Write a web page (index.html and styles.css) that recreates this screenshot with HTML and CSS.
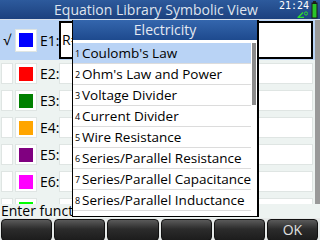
FILE: index.html
```html
<!DOCTYPE html>
<html lang="en">
<head>
	<meta charset="UTF-8">
	<title>Equation Library Symbolic View</title>
	<link rel="stylesheet" href="styles.css">
</head>
<body>
<div class="screen">

	<div class="titlebar">
		<div class="title">Equation Library Symbolic View</div>
		<div class="status">
			<div class="clock">
				<span class="time">21:24</span>
				<svg class="angle" width="11" height="7" viewBox="0 0 11 7">
					<path d="M1 6.5 L6 1.5 M0.5 6.5 H7" stroke="#2ee02e" stroke-width="1.3" fill="none"/>
					<circle cx="9" cy="2.5" r="1.6" stroke="#2ee02e" stroke-width="1" fill="none"/>
				</svg>
			</div>
			<svg class="battery" width="7" height="18" viewBox="0 0 7 18">
				<rect x="2" y="0" width="3" height="2" fill="#222"/>
				<rect x="0.5" y="1.5" width="6" height="16" fill="#1a1a1a"/>
				<rect x="1.5" y="3" width="4" height="13.5" fill="#29c429"/>
			</svg>
		</div>
	</div>

	<div class="main">
		<div class="rows">
			<div class="row sel">
				<div class="chk">&#8730;</div>
				<div class="swatch"><span class="sq" style="background:#0000ff"></span></div>
				<div class="lbl">E1:</div>
				<div class="field">R=</div>
			</div>
			<div class="row">
				<div class="chk"></div>
				<div class="swatch"><span class="sq" style="background:#ff0000"></span></div>
				<div class="lbl">E2:</div>
				<div class="field"></div>
			</div>
			<div class="row">
				<div class="chk"></div>
				<div class="swatch"><span class="sq" style="background:#008000"></span></div>
				<div class="lbl">E3:</div>
				<div class="field"></div>
			</div>
			<div class="row">
				<div class="chk"></div>
				<div class="swatch"><span class="sq" style="background:#ffa500"></span></div>
				<div class="lbl">E4:</div>
				<div class="field"></div>
			</div>
			<div class="row">
				<div class="chk"></div>
				<div class="swatch"><span class="sq" style="background:#800080"></span></div>
				<div class="lbl">E5:</div>
				<div class="field"></div>
			</div>
			<div class="row">
				<div class="chk"></div>
				<div class="swatch"><span class="sq" style="background:#ff00ff"></span></div>
				<div class="lbl">E6:</div>
				<div class="field"></div>
			</div>
			<div class="row">
				<div class="chk"></div>
				<div class="swatch"><span class="sq" style="background:#00ff00"></span></div>
				<div class="lbl">E7:</div>
				<div class="field"></div>
			</div>
		</div>
		<div class="vscroll"></div>
	</div>

	<div class="help">Enter function to solve</div>

	<div class="softkeys">
		<div class="key"></div>
		<div class="key"></div>
		<div class="key"></div>
		<div class="key"></div>
		<div class="key"></div>
		<div class="key">OK</div>
	</div>

	<!-- choose box -->
	<div class="popup">
		<div class="popup-head">Electricity</div>
		<div class="popup-body">
			<ul class="choices">
				<li class="cur"><span class="num">1</span>Coulomb's Law</li>
				<li><span class="num">2</span>Ohm's Law and Power</li>
				<li><span class="num">3</span>Voltage Divider</li>
				<li><span class="num">4</span>Current Divider</li>
				<li><span class="num">5</span>Wire Resistance</li>
				<li><span class="num">6</span>Series/Parallel Resistance</li>
				<li><span class="num">7</span>Series/Parallel Capacitance</li>
				<li><span class="num">8</span>Series/Parallel Inductance</li>
				<li><span class="num">9</span>Capacitive Energy</li>
			</ul>
			<div class="pscroll"></div>
		</div>
	</div>

</div>
</body>
</html>
```

FILE: styles.css
```css
* {
	margin: 0;
	padding: 0;
	box-sizing: border-box;
}
body {
	width: 320px;
	height: 240px;
	overflow: hidden;
	background: #edf3f1;
	font-family: "Open Sans", "DejaVu Sans", sans-serif;
	color: #000;
}
.screen {
	position: relative;
	width: 320px;
	height: 240px;
	display: flex;
	flex-direction: column;
}

/* title bar */
.titlebar {
	height: 20px;
	display: grid;
	background: linear-gradient(#2d5a9c, #1c417f);
	border-bottom: 1px solid #d6dfe9;
}
.title {
	grid-area: 1 / 1;
	text-align: center;
	padding-right: 8px;
	color: #dfe4ee;
	font-size: 14px;
	line-height: 19px;
}
.status {
	grid-area: 1 / 1;
	justify-self: end;
	display: flex;
	gap: 2px;
	padding: 1px 2px 0 0;
}
.clock {
	display: flex;
	flex-direction: column;
	align-items: flex-end;
}
.time {
	font-family: "DejaVu Sans Mono", monospace;
	font-size: 10px;
	line-height: 10px;
	color: #fff;
}
.angle {
	margin-right: 1px;
}

/* equation rows */
.main {
	flex: 1;
	display: flex;
	overflow: hidden;
}
.rows {
	flex: 1;
	overflow: hidden;
}
.row {
	height: 27px;
	display: flex;
	align-items: center;
	padding: 0 0 0 1px;
}
.row.sel {
	height: 40px;
	background: #b9d3f5;
}
.chk {
	width: 12px;
	height: 21px;
	margin-right: 2px;
	background: #fff;
	border: 1px solid #dfe5e3;
	font-size: 14px;
	line-height: 19px;
	text-align: center;
}
.sel .chk {
	background: none;
	border: none;
}
.swatch {
	width: 22px;
	height: 21px;
	background: #fff;
	border: 1px solid #dfe5e3;
	display: flex;
	align-items: center;
	justify-content: center;
}
.sel .swatch {
	height: 23px;
}
.sq {
	width: 14px;
	height: 14px;
}
.lbl {
	width: 22px;
	padding-left: 3px;
	font-size: 14px;
}
.field {
	flex: 1;
	height: 21px;
	margin-right: 2px;
	background: #fff;
	border: 1px solid #dfe5e3;
}
.sel .field {
	height: 38px;
	border: 2px solid #000;
	font-size: 14px;
	line-height: 34px;
	padding-left: 1px;
}
.vscroll {
	width: 5px;
	background: #999;
}

.help {
	height: 14px;
	font-size: 14px;
	line-height: 14px;
	padding-left: 1px;
	white-space: nowrap;
}

/* soft menu keys */
.softkeys {
	height: 22px;
	display: grid;
	grid-template-columns: repeat(6, 1fr);
	gap: 2px;
	padding: 1px 2px 0 1px;
	background: #e6e9e8;
}
.key {
	border: 1px solid #111;
	border-radius: 4px;
	background: linear-gradient(#5a5a5a, #2c2c2c 45%, #1c1c1c);
	color: #e0e0e0;
	font-size: 14px;
	line-height: 20px;
	text-align: center;
}

/* choose box */
.popup {
	position: absolute;
	left: 72px;
	top: 20px;
	width: 187px;
	height: 197px;
	display: flex;
	flex-direction: column;
	background: #fff;
	border-left: 1px solid #000;
	border-right: 2px solid #000;
	border-bottom: 1px solid #000;
	overflow: hidden;
}
.popup-head {
	height: 20px;
	background: linear-gradient(#3466ad, #1e4a8e);
	color: #e6eaf2;
	text-align: center;
	font-size: 14px;
	line-height: 20px;
}
.popup-body {
	flex: 1;
	display: flex;
	padding-top: 3px;
	overflow: hidden;
}
.choices {
	flex: 1;
	list-style-type: none;
}
.choices li {
	height: 21px;
	border-bottom: 1px solid #dcdcdc;
	font-size: 13.5px;
	line-height: 20px;
	padding-left: 2px;
	white-space: nowrap;
}
.choices li.cur {
	background: #b9d3f5;
}
.num {
	font-size: 9px;
	display: inline-block;
	width: 7px;
	vertical-align: 1px;
}
.pscroll {
	width: 4px;
	height: 62px;
	margin: 0 1px 0 1px;
	background: #8a8a8a;
}
```
